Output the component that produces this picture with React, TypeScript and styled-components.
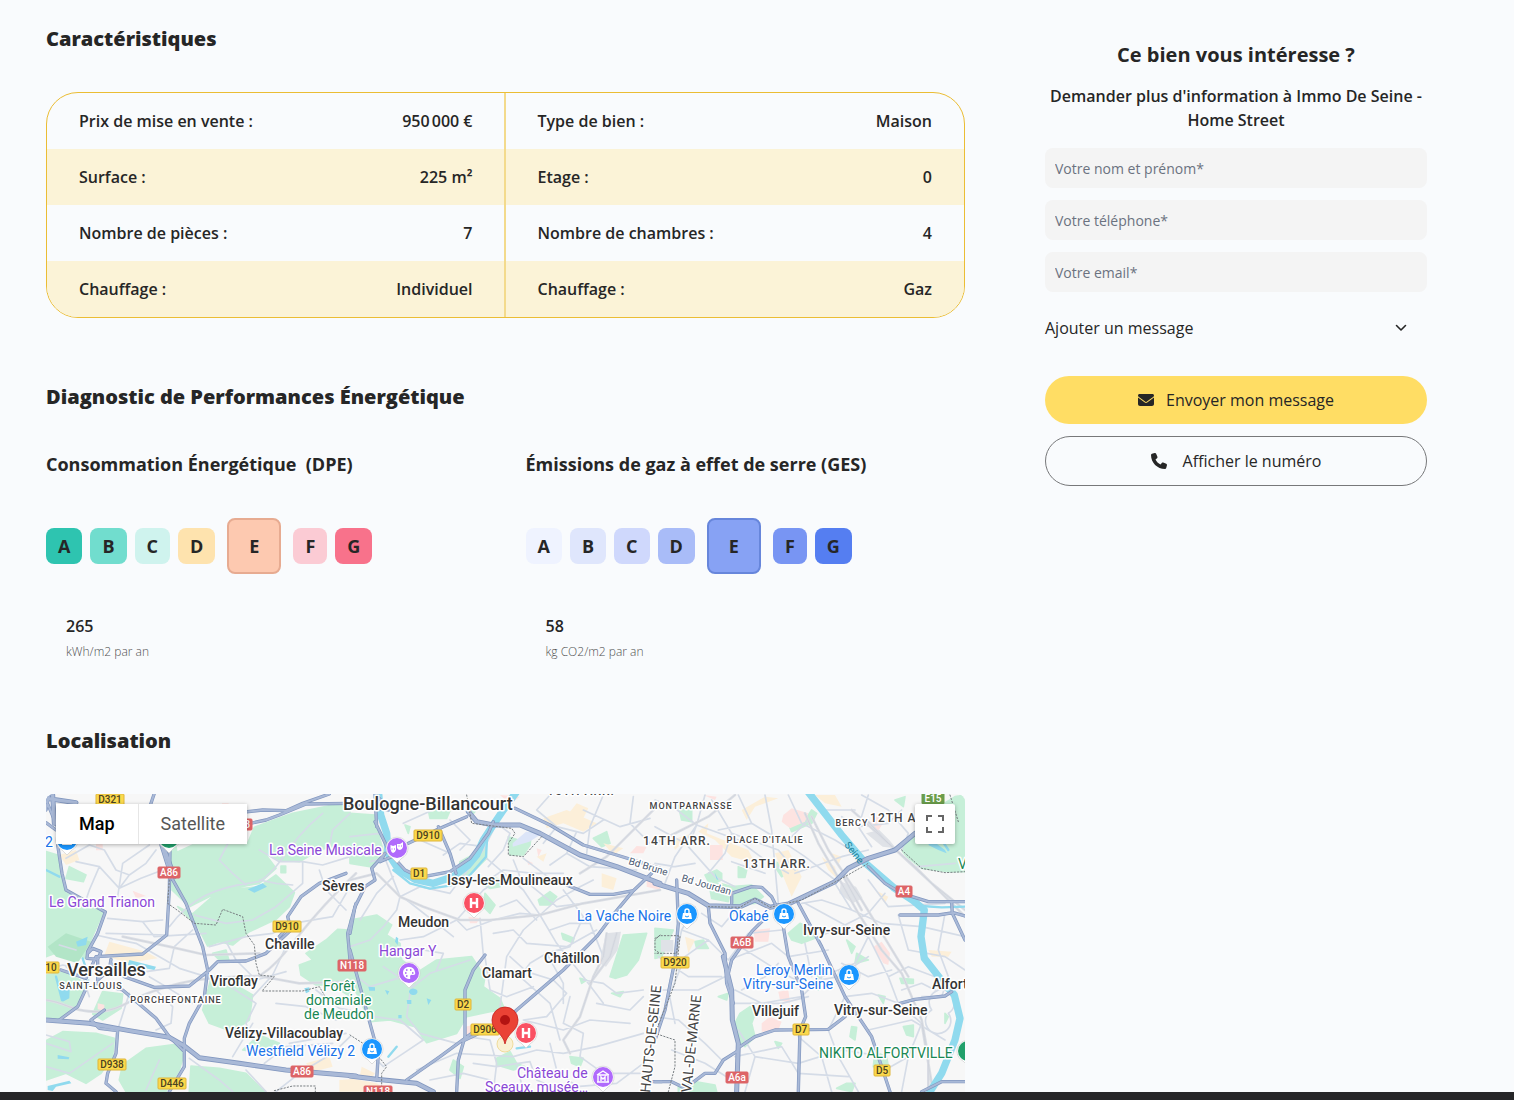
import React from 'react';
import styled, { createGlobalStyle } from 'styled-components';
import { FaEnvelope, FaPhone } from 'react-icons/fa6';

const GlobalStyle = createGlobalStyle`
  *, *::before, *::after { box-sizing: border-box; }
  body {
    margin: 0;
    background: #f9fbfd;
    color: #262626;
    font-family: "Open Sans", "Noto Sans", sans-serif;
    font-size: 16px;
    line-height: 24px;
  }
  h2, h3, p { margin: 0; }
`;

const Page = styled.div`
  display: flex;
  align-items: flex-start;
  gap: 80px;
  padding: 24px 87px 0 46px;
`;

const Content = styled.main`
  flex: 1;
  min-width: 0;
`;

const SectionTitle = styled.h2`
  font-size: 20px;
  line-height: 30px;
  font-weight: 800;
`;

const Features = styled.table`
  width: 100%;
  margin: 38px 0 64px;
  table-layout: fixed;
  border: 1px solid #ebbd34;
  border-radius: 32px;
  border-spacing: 0;
  overflow: hidden;
`;

const FeatureRow = styled.tr`
  height: 56px;
  &:nth-child(even) { background: #fbf3d7; }
`;

const FeatureName = styled.th`
  padding: 0 0 0 32px;
  text-align: left;
  font-weight: 600;
`;

const FeatureValue = styled.td<{ $divided?: boolean }>`
  padding: 0 32px 0 0;
  text-align: right;
  font-weight: 600;
  ${(p) => p.$divided && 'padding-right: 31px; border-right: 2px solid #f3da8c;'}
`;

const Diagnostics = styled.div`
  display: grid;
  grid-template-columns: 1fr 1fr;
  gap: 40px;
  margin: 38px 0 62px;
`;

const DiagnosticTitle = styled.h3`
  font-size: 18px;
  line-height: 28px;
  font-weight: 700;
  white-space: pre;
`;

const Scale = styled.div`
  display: flex;
  align-items: center;
  gap: 8px;
  height: 56px;
  margin: 40px 0;
`;

const Grade = styled.span<{ $color: string; $ring?: string }>`
  margin: ${(p) => (p.$ring ? '0 4px' : '0')};
  padding: ${(p) => (p.$ring ? '12px 20px' : '4px 12px')};
  border: ${(p) => (p.$ring ? `2px solid ${p.$ring}` : '0')};
  border-radius: 8px;
  background: ${(p) => p.$color};
  font-size: 18px;
  line-height: 28px;
  font-weight: 700;
`;

const Measure = styled.p`
  padding-left: 20px;
  font-weight: 600;
`;

const Unit = styled.small`
  display: block;
  padding-top: 2px;
  font-size: 12px;
  font-weight: 300;
  color: #505050;
`;

const Aside = styled.aside`
  width: 382px;
  padding-top: 16px;
`;

const AsideTitle = styled.h2`
  font-size: 20px;
  line-height: 30px;
  font-weight: 700;
  text-align: center;
`;

const AsideText = styled.p`
  margin: 14px 0 16px;
  font-weight: 600;
  text-align: center;
`;

const Form = styled.form`
  display: flex;
  flex-direction: column;
  gap: 12px;
`;

const Field = styled.input`
  width: 100%;
  height: 40px;
  padding: 0 10px;
  border: 0;
  border-radius: 8px;
  background: #f4f4f4;
  color: #262626;
  font: 14px/20px "Open Sans", sans-serif;
  &::placeholder { color: #6b7280; opacity: 1; }
`;

const Disclosure = styled.button`
  display: flex;
  align-items: center;
  justify-content: space-between;
  height: 48px;
  margin-bottom: 12px;
  padding: 0 16px 0 0;
  border: 0;
  background: none;
  color: #262626;
  font: 16px/24px "Open Sans", sans-serif;
  cursor: pointer;
`;

const Action = styled.button<{ $outlined?: boolean }>`
  display: flex;
  align-items: center;
  justify-content: center;
  gap: ${(p) => (p.$outlined ? '16px' : '12px')};
  height: ${(p) => (p.$outlined ? '50px' : '48px')};
  border: ${(p) => (p.$outlined ? '1px solid #77787a' : '0')};
  border-radius: 25px;
  background: ${(p) => (p.$outlined ? 'transparent' : '#ffdd64')};
  color: #262626;
  font: 16px/24px "Open Sans", sans-serif;
  cursor: pointer;
`;

const MapFrame = styled.div`
  position: relative;
  height: 298px;
  margin-top: 38px;
  overflow: hidden;
  border-radius: 8px 8px 0 0;
  background: #f7f7f7;
`;

const MapDrawing = styled.svg`
  display: block;
  width: 100%;
  height: 100%;
  font-family: Roboto, sans-serif;
`;

const MapTypes = styled.div`
  position: absolute;
  top: 10px;
  left: 10px;
  display: flex;
  background: #fff;
  box-shadow: 0 1px 4px rgba(0, 0, 0, 0.3);
`;

const MapType = styled.button<{ $active?: boolean }>`
  height: 40px;
  padding: 0 23px;
  border: 0;
  background: #fff;
  color: #000;
  font: 500 18px/24px Roboto, sans-serif;
  cursor: pointer;
  ${(p) => !p.$active && `
    padding: 0 22px;
    border-left: 1px solid #e6e6e6;
    color: #565656;
    font-weight: 400;
  `}
`;

const FullScreen = styled.button`
  position: absolute;
  top: 10px;
  right: 10px;
  display: grid;
  place-items: center;
  width: 40px;
  height: 40px;
  padding: 0;
  border: 0;
  border-radius: 2px;
  background: #fff;
  box-shadow: 0 1px 4px rgba(0, 0, 0, 0.3);
  cursor: pointer;
`;

const Footer = styled.footer`
  height: 8px;
  background: #262628;
`;

const features = [
  ['Prix de mise en vente :', '950\u202f000 €', 'Type de bien :', 'Maison'],
  ['Surface :', '225 m²', 'Etage :', '0'],
  ['Nombre de pièces :', '7', 'Nombre de chambres :', '4'],
  ['Chauffage :', 'Individuel', 'Chauffage :', 'Gaz'],
];

const diagnostics = [
  {
    title: 'Consommation Énergétique  (DPE)',
    value: '265',
    unit: 'kWh/m2 par an',
    ring: '#e7ab91',
    colors: ['#2ec4b0', '#71ddce', '#cff3ee', '#fee3ae', '#fdc9b0', '#fbcbd4', '#f8728b'],
  },
  {
    title: 'Émissions de gaz à effet de serre (GES)',
    value: '58',
    unit: 'kg CO2/m2 par an',
    ring: '#6786db',
    colors: ['#eff3ff', '#dfe6fc', '#cfd8fc', '#a9bcf8', '#87a2f4', '#7895f3', '#557ef1'],
  },
];

/* The three map tiles are drawn on a grid of three units per pixel. */
type Tile = { x: number; park: string; city: string; blush: string; rail: string; minor: string; river: string; water: string; stream: string; road: string; wide: string; border: string };

const tiles: Tile[] = [
  {
    x: 0,
    park: 'M0 185L35 195L48 270L60 310L110 330L172 366L135 450L118 505L60 478L0 500Z M0 555L60 545L118 580L98 650L40 690L0 680Z M375 195L440 165H605L660 195L690 235L640 280L575 292L500 315L430 350L378 300Z M625 112L690 88L740 70L860 45L912 50V195L860 170L820 180L760 215L700 210L640 180L605 160Z M395 350L440 372L520 302L640 290L690 255L745 308L730 350L690 388L610 425L560 465L520 455L485 468L455 410Z M912 420L875 418L840 450L780 490L800 510L760 525L765 555L810 585H860L912 620Z M495 565L560 580L620 615L610 690L560 725L490 700L470 660Z M170 605L230 612L225 655L170 690L140 672Z M0 752L50 725L150 730L205 745L200 800L165 850L120 880L60 850L0 870Z M230 825L300 775L395 762L415 790L400 840L360 905H240L220 870Z M435 828L520 835L600 850L655 905H430Z M70 230L120 255L112 275L60 265Z M705 228h14v20h-14Z M345 165L390 170L395 205L370 230Z M500 490L540 480L550 515L520 510Z M640 735L700 760L660 790L590 780Z',
    city: 'M40 195L90 180L100 210L60 225Z M190 455L300 485L335 505L240 520L175 495Z M780 820L850 800L860 830L800 845Z M880 870L912 868V905H880Z',
    blush: 'M260 302L300 318L270 325Z M150 163h20v18h-20Z M528 40h20v14h-20Z M155 640l20 4v18l-20 -4Z',
    rail: 'M0 630C70 640 70 665 160 665C230 660 260 620 340 598C420 570 500 560 640 558C730 500 740 430 930 250 M230 440L370 470L480 495L640 490 M640 558L760 580L930 575',
    minor: 'M60 205L130 165L175 180L210 240L250 255L220 295L160 230L90 215 M160 230L130 300L120 330 M220 295L285 265L350 240 M250 255L300 220L330 180 M310 165L230 220L215 320 M185 385L290 395L350 390 M175 370L150 435L195 445L270 460L400 535L480 560 M180 430L365 435 M290 395L325 440L480 430 M370 410C430 330 500 290 640 275C710 230 720 160 830 70 M640 180L700 215L770 215L770 280L690 350L620 390L540 400L445 375 M770 215L830 225L912 200 M740 285L690 280L640 270 M850 170L860 120L912 70 M545 162L520 210L560 250L600 285 M190 530L250 540L300 545L370 535L385 470L440 420 M490 470L600 440L680 430L740 400L860 380L912 290 M540 455L570 510L630 570L720 545 M505 560L630 640L600 700L620 750 M320 590L380 650L375 700L330 720 M130 620L110 560L60 530 M440 640L360 590L310 560 M0 540L50 525L120 540 M40 465L90 480 M620 700L560 800 M620 620L680 555L720 470 M820 240L840 300L900 360 M0 735L70 755L75 785L0 760 M250 610L215 720L330 735 M200 760L70 850L0 830 M340 810L300 900 M430 805L520 870L560 905 M600 840L660 905 M690 905L760 850L860 790L912 740 M730 760L900 730 M655 820L720 770L860 760 M810 600L880 655L912 660 M690 640L780 650L870 690',
    river: '',
    water: 'M38 590L72 575L70 625L50 635Z M90 455L125 440L120 465L95 470Z M605 298L650 280L663 290L625 308Z M250 510L330 530L325 540L245 525Z M35 795L70 802L68 808L35 806Z M5 888L70 872L76 880L30 890L20 903L5 900Z M775 595L790 592V605L780 610Z M120 570L130 568L128 590Z',
    stream: 'M0 240L40 260 M30 560L48 630 M110 505L120 535',
    road: 'M35 165L48 250L60 300L178 366L155 430L125 485L123 505L155 508L165 485L140 475L125 490 M0 30L40 125 M10 10L0 60 M0 98L30 120 M45 540L120 565L150 500L290 492L362 435L370 300L372 180L305 70L325 10 M155 505L155 570L190 540L195 508 M195 520L235 560L325 592L430 588L490 540L515 515L600 513L660 490L735 420L725 380L765 320L820 280L900 250 M590 105L660 90L700 75L780 42L912 40 M560 70L650 60L720 62L770 40L850 12 M125 585L95 650L40 690 M175 660L135 690L160 715L215 722L210 790L185 850L180 880L210 905 M150 580L230 600L330 685L370 740L415 785L415 830L370 905 M345 165L375 260L420 340L470 470L485 540L475 620L430 700L415 745L415 785 M930 340L905 430L912 510L930 540 M700 440L735 400',
    wide: 'M0 690L130 700L250 722L370 742L415 768L460 803L580 820L720 840L930 858 M0 25L90 38 M20 15L25 100 M350 165L385 260',
    border: 'M370 270L365 340L400 365L445 400L510 405L530 358L590 380L600 430L625 465L630 520L640 555L685 560L648 603H770L820 590L850 640 M685 902L740 888H808V905',
  },
  {
    x: 912,
    park: 'M0 70L75 75L85 130L105 200L60 230L0 220Z M330 215L395 180L408 165L410 205L370 245L330 262L325 245Z M0 390L80 375L125 405L110 435L150 460L155 510L205 545L260 510L365 500L405 560L400 590L450 625L465 660L420 665L350 680L320 730L230 758L195 710L120 690L60 695L20 610L0 570Z M780 560L820 435L890 430L865 510L830 555L795 565Z M475 140L505 150L545 125L540 165L520 195H480Z M730 145L770 125L780 160L755 170Z M565 330L600 305L620 320L600 345H570Z M390 280L430 262L455 270L450 290L420 295Z M405 310L435 345L420 370L400 350Z M635 430L672 445L668 458L640 448Z M235 60L300 62L290 85L240 85Z M165 105L180 110L175 130Z M350 45L395 42L370 70Z M440 805L480 785L500 820L525 830L490 840L440 825Z M310 810L340 830L330 865L300 840Z M785 610L820 605L810 620Z M660 800L700 805L690 830L665 820Z M690 565L710 570L695 580Z',
    city: 'M580 85L650 60L740 100L700 125L640 100L590 115Z M680 40L715 55L700 85L660 65Z M755 250L800 265L790 300L755 290Z M560 200L590 190L580 215Z M760 160L820 175L790 195Z M390 525L420 545L400 555Z M0 865L80 880L120 905H0Z M35 830L75 850L60 870L30 855Z',
    blush: 'M840 190L860 168L890 170L880 190Z M355 380L390 385L380 400H360Z M345 710L370 705V750L350 740Z M560 175L575 180L565 200Z M530 210L550 220L535 225Z M450 15L510 20L480 42Z M890 270L930 280V300L890 290Z',
    rail: 'M0 270L80 250L150 320L220 350L330 390L420 390L570 375L700 340L930 300 M930 40L860 110L770 200L690 250 M770 430L760 500L730 560L690 680L640 750L660 790 M800 430L780 500L720 580',
    minor: 'M0 140L90 130L160 180 M60 215L105 205L150 320L140 360L100 410L60 450L0 470 M150 320L210 290L300 310L330 270L400 180L440 100L480 130L460 180L415 230 M280 195L330 160L400 170 M160 100L260 55L350 40 M210 150L300 190 M410 205L520 300L570 375L620 330L690 290L730 270 M520 205L600 265L690 300 M430 260L460 240L550 250L640 250 M490 210L510 260L620 350L700 340 M390 385L400 495 M150 450L220 440L320 390L400 300L430 280 M320 390L350 420L430 390L510 370L570 375L520 420L470 500L450 650 M570 375L620 460L700 560L760 640 M600 420L660 400L720 400L760 500 M640 300L700 380L660 470L590 490L540 520L510 560L600 640L630 750 M430 430L490 420L530 460L650 470L740 420 M480 500L530 545L610 570L650 610L590 680L520 690 M405 500L420 600L470 620L550 590 M190 600L160 560L60 590L20 560 M100 530L190 590L240 550L360 510 M180 610L170 680L210 730L320 760 M70 680L150 690L220 750L160 790L100 830L70 800 M200 840L320 790L490 800L560 780L640 790L740 770L880 730 M350 740L420 750L440 820L430 905 M370 820L440 830L540 815L560 870L640 905 M600 760L620 840L680 890L800 880L880 820 M500 820L520 905 M660 620L640 700L700 730L690 800L760 850L870 850 M520 690L640 720L720 690L840 700 M700 570L760 580L800 610L880 600 M740 640L840 660L880 620 M590 490L640 580L640 640 M220 480L280 490L260 540 M300 90L360 150L330 180 M130 260L80 310L30 390 M170 330L260 400L310 440 M450 350L500 330L560 390 M600 15L560 60L620 110L700 130L760 90 M620 110L580 160 M760 15L720 110L710 190 M850 20L840 100L900 160 M700 60L810 110L900 85 M650 190L720 230L860 240 M680 125L650 190L600 225 M240 870L340 850L420 870',
    river: 'M85 0L92 75L110 130L114 190L145 238L195 268L250 280L310 260L355 225L380 195L400 150L425 112L460 60L500 5',
    water: 'M55 590L75 592V602H58Z M105 600L118 604L112 615Z M178 600A12 10 0 1 0 202 608A12 10 0 1 0 178 604Z M230 625L244 630L235 645Z M145 675h10v10h-10Z M138 440L145 445L143 465L135 455Z M495 740L512 740L505 755Z M170 630h14v12h-12Z',
    stream: 'M115 800L140 770 M500 775L540 770 M412 135L408 200L360 255L300 287L240 296L180 280L130 240',
    road: 'M0 45L120 60L75 12L80 110 M160 185L90 215L105 190L65 235L75 270L45 290L15 350L0 430 M75 95L120 190L165 240L210 262L300 245L360 205L415 130L430 95 M175 160L270 115L350 80 M265 110L300 190L318 250 M495 55L600 105L700 165L800 195L930 235 M650 285L720 313H790L850 302 M905 250L850 302L785 380L740 440L640 540L500 660L440 720 M405 495L370 540L345 600V740L325 810L320 905 M365 730L270 800L170 870 M440 705L345 750 M0 480L30 590L60 700L85 790L80 870 M935 875H905',
    wide: 'M355 65L380 95L430 105H510L570 130L690 195L800 230L930 280 M0 858L80 868L200 880L250 905',
    border: 'M350 15L365 100L485 115L495 130L475 160V195L520 200L575 140 M0 735L70 780L110 830L95 850V905 M930 435L915 450V480L930 490',
  },
  {
    x: 1827,
    park: 'M0 415L55 420L20 500L0 505Z M70 45L110 50V95L80 90Z M150 255L185 240L200 250V270L165 285Z M230 290L290 285L325 320L300 340L230 345Z M400 430L435 400L460 410L480 445L440 460L410 450Z M740 180L820 70L900 20L930 15V245L880 245L800 235L755 200Z M160 270L230 290L220 335L170 325Z M255 670L285 650L305 660L290 700L300 740L270 770L240 740L235 710Z M70 885L120 875L180 885L185 905H70Z M575 450L600 470L590 490Z M640 510L600 520L605 490Z M590 710L605 712L600 750L585 740Z M670 615L690 620L685 640Z M660 785L695 800L700 830H655Z M745 710L775 705V740L755 735Z M120 455L145 450L160 475L125 475Z M190 620L220 610L215 630Z M350 215L380 220L400 250L380 260Z M400 100L450 90L470 60L485 70L470 100L410 125Z M720 30L750 20L745 50Z M250 230L275 240L270 262H250Z M575 880L600 880L590 905L545 895Z M490 555L500 560L490 600L480 580Z M735 565L775 568V580H740Z M360 755L380 760L370 775Z M870 670L880 680L870 700Z',
    city: 'M130 125L160 100L155 130L280 180L300 220L230 200L180 150Z M260 60L330 20L370 25L300 50L275 90Z M360 190L400 180L440 260L410 320L385 260Z M500 200L540 230L550 270L520 240Z M660 300L700 320L690 340Z M50 150L110 130L60 180Z M480 15H540L560 50L510 40Z M820 480L890 485L880 500H830Z M90 440L120 450L100 490Z M530 190L560 200L550 225Z',
    blush: 'M385 75L410 55L460 70L450 95L405 115L380 95Z M165 165H203V210H165Z M655 470L680 455L705 490L700 525L685 520Z M320 700L345 680L380 695L370 720L320 725Z M370 605L400 600L405 640L375 630Z M295 420L345 415L340 455L300 455Z M645 100L670 75L690 90L665 130Z M145 15L185 20L180 30Z',
    rail: 'M0 160L80 120L160 80L240 15 M450 70L490 160L560 280L610 370L680 480L740 550L800 690L820 800V905 M470 80L520 180L620 330L760 560 M590 60L700 160L780 230L930 380 M635 90L690 150L830 280L930 360 M560 250L620 360 M800 700L830 880',
    minor: 'M0 30L60 55L125 105L250 150L330 210L400 250 M125 105L150 15 M125 105L60 200L30 280 M125 105L100 170L180 260L240 290 M170 30L230 130L210 190L160 250 M230 130L370 180L420 240 M250 15L290 100L390 160L450 200L540 270 M330 15L350 120L370 340 M290 100L190 120 M400 15L440 100L540 150L620 200 M390 160L460 90 M420 250L560 200L640 180 M620 15L700 60L760 130L740 180 M560 80L610 110L700 100L740 60 M640 15L610 110L650 170 M540 280L590 360L500 330L440 340 M450 340L560 400L640 440L700 560L730 640 M490 440L540 420L640 370L690 310 M590 360L680 400L800 410L930 440 M640 440L600 520L500 560L440 620L320 640L240 600 M120 350L80 420L40 600L60 700 M80 420L160 450L220 510L350 460L400 500L520 480 M160 450L90 500L50 600 M240 460L350 530L440 580L550 560L640 500 M220 510L280 430L380 420 M250 350L200 410L140 370 M230 640L380 640L460 620 M260 600L330 560L370 520 M250 720L300 800L430 820L560 780L690 800 M300 800L270 905 M430 740L500 800L530 905 M240 800L380 770L430 850L580 860 M570 620L520 720L550 800L610 905 M570 620L650 610L730 640L800 700L760 800L740 905 M640 720L770 690L870 750 M690 840L760 800 M730 375L760 480L870 500L930 540 M870 370L850 480L880 560L860 620L800 620 M700 560L760 530L840 560 M740 600L800 580L840 600 M830 660A38 38 0 1 0 880 670A38 38 0 1 0 830 660 M560 520L640 560L710 540 M450 460L470 560 M0 110L90 160 M0 220L60 230L120 220 M20 600L130 600L210 560 M0 680L70 690L150 760L200 810 M50 780L150 820L230 870 M10 500L100 560L200 560 M640 270L700 350L870 340 M790 230L900 220 M460 15L500 60L600 60 M230 215L330 250',
    river: 'M455 0L560 135L630 218L715 292L775 332L808 360L798 440L808 505L855 565L898 615L915 685L900 750L860 850L825 905',
    water: 'M830 150L870 180L875 190L850 180L820 165Z M178 245L190 270L185 268Z',
    stream: 'M860 150L880 180 M800 348L860 352L930 350',
    road: 'M65 270L70 400L60 510L30 660L0 750 M230 340V310L290 290L320 292L350 320L365 350 M160 350L165 400L210 490L215 580L235 640 M215 570L230 510L290 425L325 390 M385 410L400 500L440 600L452 680L435 720L430 905 M430 340L500 470L570 620L650 740L705 905 M255 770L300 740L360 720L520 718L570 680 M735 640L780 628L870 618L890 605 M0 875H50L90 895L150 850H180L205 810L245 785 M735 375H850L895 368L930 378 M890 340L892 370L930 450 M640 230L690 280L740 310L820 335H930 M800 905L860 875H930',
    wide: 'M0 280L100 310L160 347L255 350L300 330L345 352L400 342L540 275L580 235L640 205L720 180L780 130 M205 500L230 600L232 690L250 760L245 905',
    border: 'M0 445L15 437H70L65 490H0 M75 440L60 580L0 730L60 750L60 830L40 905 M160 350L255 352L300 325L345 352L440 330L570 260L640 220 M740 180L800 235L870 248L930 245 M885 15L910 95',
  },
];

const places: [string, number, number, number][] = [
  ['Boulogne-Billancourt', 297, 16, 18],
  ['Versailles', 21, 182, 18],
  ['Sèvres', 276, 97, 14],
  ['Chaville', 219, 155, 14],
  ['Viroflay', 164, 192, 14],
  ['Vélizy-Villacoublay', 179, 244, 14],
  ['Meudon', 352, 133, 14],
  ['Issy-les-Moulineaux', 401, 91, 14],
  ['Clamart', 436, 184, 14],
  ['Châtillon', 498, 169, 14],
  ['Ivry-sur-Seine', 757, 141, 14],
  ['Villejuif', 706, 222, 14],
  ['Vitry-sur-Seine', 788, 221, 14],
  ['Alfortville', 886, 195, 14],
];

const pois: [string, number, number, string][] = [
  ['La Seine Musicale', 223, 61, '#8a48d6'],
  ['Le Grand Trianon', 3, 113, '#8a48d6'],
  ['Hangar Y', 333, 162, '#8a48d6'],
  ['Château de', 471, 284, '#8a48d6'],
  ['Sceaux, musée…', 439, 298, '#8a48d6'],
  ['La Vache Noire', 531, 127, '#1a73e8'],
  ['Okabé', 683, 127, '#1a73e8'],
  ['Leroy Merlin', 710, 181, '#1a73e8'],
  ['Vitry-sur-Seine', 697, 195, '#1a73e8'],
  ['Westfield Vélizy 2', 200, 262, '#1a73e8'],
  ['2', -1, 53, '#1a73e8'],
  ['Forêt', 277, 197, '#198754'],
  ['domaniale', 260, 211, '#198754'],
  ['de Meudon', 258, 225, '#198754'],
  ['NIKITO ALFORTVILLE', 773, 264, '#198754'],
  ['V', 912, 75, '#198754'],
];

const districts: [string, number, number, number][] = [
  ['SAINT-LOUIS', 45, 195, 9],
  ['PORCHEFONTAINE', 130, 209, 9],
  ['MONTPARNASSE', 645, 15, 9],
  ["PLACE D'ITALIE", 719, 49, 9],
  ['BERCY', 806, 32, 9],
  ['14TH ARR.', 631, 51, 12],
  ['13TH ARR.', 731, 74, 12],
  ['15TH ARR.', 535, 1, 12],
  ['12TH ARR.', 858, 28, 12],
];

const shields: [string, number, number, string][] = [
  ['D321', 64, 5, 'y'], ['A86', 123, 78, 'r'], ['D910', 241, 132, 'y'], ['10', 5, 173, 'y'],
  ['N118', 306, 171, 'r'], ['D938', 66, 270, 'y'], ['D446', 126, 289, 'y'], ['A86', 256, 277, 'r'],
  ['D910', 382, 41, 'y'], ['D1', 373, 79, 'y'], ['D2', 417, 210, 'y'], ['D906', 439, 235, 'y'],
  ['N118', 332, 297, 'r'], ['E15', 887, 4, 'g'], ['A4', 858, 97, 'r'], ['A6B', 696, 148, 'r'],
  ['D920', 629, 168, 'y'], ['D7', 755, 235, 'y'], ['D5', 836, 276, 'y'], ['A6a', 691, 283, 'r'],
  ['A3', 198, 30, 'r'],
];

const pins: [string, number, number, string][] = [
  ['mask', 351, 54, '#b06afc'], ['H', 428, 109, '#fa5163'], ['palette', 363, 179, '#b06afc'],
  ['H', 480, 239, '#fa5163'], ['bag', 326, 255, '#1a96ff'], ['bag', 641, 120, '#1a96ff'],
  ['bag', 738, 120, '#1a96ff'], ['bag', 803, 181, '#1a96ff'], ['museum', 557, 283, '#b06afc'],
  ['bag', 21, 46, '#1a96ff'], ['leaf', 123, 44, '#22a06b'], ['leaf', 922, 257, '#22a06b'],
];

function PinGlyph({ kind }: { kind: string }) {
  switch (kind) {
    case 'H':
      return <path d="M-3-5V5M3-5V5M-3 0H3" stroke="#fff" strokeWidth="2.4" fill="none" />;
    case 'bag':
      return (
        <>
          <path d="M-4-1H4L5 5H-5Z" fill="#fff" />
          <path d="M-2-1V-3Q-2-5 0-5T2-3V-1" stroke="#fff" strokeWidth="1.4" fill="none" />
          <path d="M-2 2Q0 4 2 2" stroke="#1a96ff" fill="none" />
        </>
      );
    case 'mask':
      return (
        <>
          <path d="M-6.5-3L-4-2L-1-3V2Q-2 5-4 5Q-6 4-6.5 1Z M0-4L3-4L6-6V-1Q5 2 3 2Q1 2 0 0Z" fill="#fff" />
          <path d="M-5.500 1H-4.500M-3 1H-2M1.500-2H2.500M4-2H5" stroke="#a65af5" />
        </>
      );
    case 'palette':
      return (
        <>
          <path d="M0-6C-8-6-8 5 0 6Q2 6 1 4Q1 1 4 2Q7 2 6-1Q5-6 0-6Z" fill="#fff" />
          <path d="M-4 0h1.500M-3-3h1.500M1-3h1.500M3 0h1.500M-3 3h1.500" stroke="#a65af5" strokeWidth="1.500" />
        </>
      );
    case 'museum':
      return <path d="M-6-2L0-6L6-2M-6-2H6M-5-1V5M5-1V5M-6 5H6M-2 4V0L0 2L2 0V4" stroke="#fff" strokeWidth="1.4" fill="none" />;
    default:
      return <path d="M-3-4H3V4H-3Z" fill="#fff" />;
  }
}

function CityMap() {
  const halo = { stroke: '#fff', strokeWidth: 3, strokeLinejoin: 'round' as const, paintOrder: 'stroke' };
  const shieldColors: Record<string, [string, string, string]> = {
    y: ['#fbd94c', '#dfb63a', '#4b4220'],
    r: ['#dd6467', '#dd6467', '#fff'],
    g: ['#6b9d4b', '#6b9d4b', '#fff'],
  };
  return (
    <MapDrawing viewBox="0 0 919 298" preserveAspectRatio="xMidYMin slice" role="img" aria-label="Map">
      <g transform="scale(0.33333) translate(0 -12)" fill="none" strokeLinejoin="round" strokeLinecap="round">
        {tiles.map((t) => (
          <g key={t.x} transform={`translate(${t.x})`}>
            <path d={t.park} fill="#c6efd8" stroke="#c6efd8" strokeWidth="5" />
            <path d={t.city} fill="#fcefd9" />
            <path d={t.blush} fill="#fde3e1" />
          </g>
        ))}
        <path d="M5 470L60 430L135 455L95 520L30 500Z" fill="#b2e5c7" />
        <path d="M1400 160L1440 125L1490 130L1450 155L1400 170Z" fill="#dce5f8" />
        <path d="M1680 430L1725 425L1715 480L1680 530L1660 520Z M1845 450H1882V485H1845Z M2385 275L2430 290L2450 325L2420 340L2380 310Z M2460 130L2500 120L2530 150L2550 175L2510 170Z" fill="#dfe2e7" />
        {tiles.map((t) => (
          <g key={t.x} transform={`translate(${t.x})`}>
            <path d={t.minor} stroke="#d5dce7" strokeWidth="5" />
            <path d={t.rail} stroke="#dcdfe5" strokeWidth="8" />
            <path d={t.rail} stroke="#cbd0d9" strokeWidth="2" />
          </g>
        ))}
        {tiles.map((t) => (
          <g key={t.x} transform={`translate(${t.x})`}>
            <path d={t.river} stroke="#90daee" strokeWidth="22" />
            <path d={t.water} fill="#90daee" />
            <path d={t.stream} stroke="#90daee" strokeWidth="7" />
          </g>
        ))}
        {tiles.map((t) => (
          <g key={t.x} transform={`translate(${t.x})`}>
            <path d={t.road} stroke="#8297bf" strokeWidth="10" />
            <path d={t.wide} stroke="#8297bf" strokeWidth="15" />
          </g>
        ))}
        {tiles.map((t) => (
          <g key={t.x} transform={`translate(${t.x})`}>
            <path d={t.road} stroke="#a9b9d7" strokeWidth="6" />
            <path d={t.wide} stroke="#a9b9d7" strokeWidth="10" />
            <path d={t.border} stroke="#777d82" strokeWidth="3" strokeDasharray="4 6" />
          </g>
        ))}
      </g>

      {shields.map(([label, x, y, kind]) => {
        const w = label.length * 6 + 4;
        const [fill, edge, ink] = shieldColors[kind];
        return (
          <g key={`${label}${x}`} transform={`translate(${x} ${y})`}>
            <rect x={-w / 2} y="-5" width={w} height="11" rx="1" fill={fill} stroke={edge} />
            <text y="4" fontSize="10" fontWeight="500" textAnchor="middle" fill={ink}>{label}</text>
          </g>
        );
      })}

      {districts.map(([label, x, y, size]) => (
        <text key={label} x={x} y={y} fontSize={size} fontWeight="500" letterSpacing="1" textAnchor="middle" fill="#444" {...halo}>{label}</text>
      ))}
      {places.map(([label, x, y, size]) => (
        <text key={label} x={x} y={y} fontSize={size} fontWeight="500" fill="#333" {...halo}>{label}</text>
      ))}
      {pois.map(([label, x, y, color]) => (
        <text key={`${label}${x}`} x={x} y={y} fontSize="14" fill={color} {...halo}>{label}</text>
      ))}
      <text transform="translate(604 299) rotate(-84)" fontSize="14" fill="#444" {...halo}>HAUTS-DE-SEINE</text>
      <text transform="translate(645 299) rotate(-84)" fontSize="14" fill="#444" {...halo}>VAL-DE-MARNE</text>
      <text transform="translate(582 70) rotate(17)" fontSize="10" fill="#4b5a72" {...halo}>Bd Brune</text>
      <text transform="translate(635 87) rotate(16)" fontSize="10" fill="#4b5a72" {...halo}>Bd Jourdan</text>
      <text transform="translate(798 51) rotate(52)" fontSize="10" fill="#19839c">Seine</text>

      {pins.map(([kind, x, y, color]) => (
        <g key={`${kind}${x}`} transform={`translate(${x} ${y})`}>
          <path d="M0 15L-5 10A11 11 0 1 1 5 10Z" fill="#fff" stroke="#c9c9c9" strokeWidth="0.6" />
          <circle r="10" fill={color} />
          <PinGlyph kind={kind} />
        </g>
      ))}
      <circle cx="459" cy="250" r="8" fill="#f9efc9" fillOpacity="0.8" stroke="#f0dc9c" />
      <path d="M459 250C457 239 446 237 446 226A13 13 0 0 1 472 226C472 237 461 239 459 250Z" fill="#ea4335" stroke="#c5221f" strokeWidth="0.8" />
      <circle cx="459" cy="226" r="5" fill="#b31412" />
    </MapDrawing>
  );
}

export default function App() {
  return (
    <>
      <GlobalStyle />
      <Page>
        <Content>
          <SectionTitle>Caractéristiques</SectionTitle>
          <Features>
            <tbody>
              {features.map(([nameA, valueA, nameB, valueB]) => (
                <FeatureRow key={nameA}>
                  <FeatureName scope="row">{nameA}</FeatureName>
                  <FeatureValue $divided>{valueA}</FeatureValue>
                  <FeatureName scope="row">{nameB}</FeatureName>
                  <FeatureValue>{valueB}</FeatureValue>
                </FeatureRow>
              ))}
            </tbody>
          </Features>

          <SectionTitle>Diagnostic de Performances Énergétique</SectionTitle>
          <Diagnostics>
            {diagnostics.map((d) => (
              <section key={d.title}>
                <DiagnosticTitle>{d.title}</DiagnosticTitle>
                <Scale>
                  {d.colors.map((color, i) => (
                    <Grade key={color} $color={color} $ring={i === 4 ? d.ring : undefined}>
                      {'ABCDEFG'[i]}
                    </Grade>
                  ))}
                </Scale>
                <Measure>
                  {d.value}
                  <Unit>{d.unit}</Unit>
                </Measure>
              </section>
            ))}
          </Diagnostics>

          <SectionTitle>Localisation</SectionTitle>
          <MapFrame>
            <CityMap />
            <MapTypes>
              <MapType type="button" $active>Map</MapType>
              <MapType type="button">Satellite</MapType>
            </MapTypes>
            <FullScreen type="button" aria-label="Toggle fullscreen view">
              <svg width="18" height="18" viewBox="0 0 18 18" fill="none" stroke="#666" strokeWidth="2">
                <path d="M1 6V1H6M12 1H17V6M17 12V17H12M6 17H1V12" />
              </svg>
            </FullScreen>
          </MapFrame>
        </Content>

        <Aside>
          <AsideTitle>Ce bien vous intéresse ?</AsideTitle>
          <AsideText>Demander plus d'information à Immo De Seine - Home Street</AsideText>
          <Form>
            <Field type="text" aria-label="Votre nom et prénom" placeholder="Votre nom et prénom*" />
            <Field type="tel" aria-label="Votre téléphone" placeholder="Votre téléphone*" />
            <Field type="email" aria-label="Votre email" placeholder="Votre email*" />
            <Disclosure type="button" aria-expanded="false">
              Ajouter un message
              <svg width="20" height="20" viewBox="0 0 20 20" fill="none" stroke="#262626" strokeWidth="1.6" strokeLinecap="round" strokeLinejoin="round">
                <path d="M5.500 7.500L10 12L14.500 7.500" />
              </svg>
            </Disclosure>
            <Action type="submit">
              <FaEnvelope size={16} />
              Envoyer mon message
            </Action>
            <Action type="button" $outlined>
              <FaPhone size={16} />
              Afficher le numéro
            </Action>
          </Form>
        </Aside>
      </Page>
      <Footer />
    </>
  );
}
